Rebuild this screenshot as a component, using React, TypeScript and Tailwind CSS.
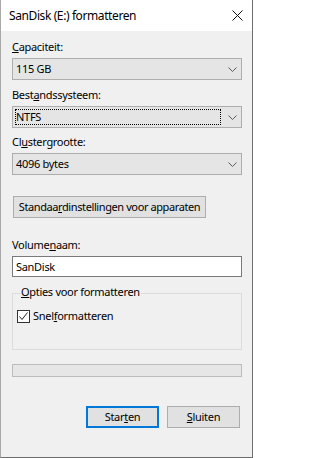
import type { ReactNode } from "react";

function Chevron() {
  return (
    <svg width="9" height="5" viewBox="0 0 9 5" className="shrink-0" aria-hidden="true">
      <polyline points="0.5,0.5 4.5,4.5 8.5,0.5" fill="none" stroke="#5a5a5a" strokeWidth="1" />
    </svg>
  );
}

function Label({ children, className = "" }: { children: ReactNode; className?: string }) {
  return <div className={`h-[16px] leading-[16px] ${className}`}>{children}</div>;
}

function Select({ value, focused = false, className = "" }: { value: string; focused?: boolean; className?: string }) {
  return (
    <div className={`flex h-[22px] items-center border border-[#adadad] bg-[#e5e5e5] p-[2px] pr-[4px] ${className}`}>
      <div
        className={`flex h-full flex-1 items-center border border-dotted ${
          focused ? "border-black" : "border-transparent"
        }`}
      >
        <span className="leading-[16px]">{value}</span>
      </div>
      <div className="ml-[7px]">
        <Chevron />
      </div>
    </div>
  );
}

export default function App() {
  return (
    <div className="flex h-[458px] w-[253px] flex-col border-r border-b border-l border-r-[#6e6e6e] border-b-[#6e6e6e] border-l-[#a8a8a8] bg-[#f0f0f0] font-['Noto_Sans',sans-serif] text-[11px] tracking-[-0.3px] whitespace-nowrap text-black">
      <div className="flex h-[31px] shrink-0 items-center justify-between bg-white pl-[8px] pr-[9px]">
        <span className="text-[12px] leading-[16px] tracking-[-0.4px]">SanDisk (E:) formatteren</span>
        <svg width="11" height="11" viewBox="0 0 11 11" aria-hidden="true">
          <path d="M0.5 0.5 L10.5 10.5 M10.5 0.5 L0.5 10.5" stroke="#111" strokeWidth="1" fill="none" />
        </svg>
      </div>

      <div className="flex flex-col pl-[11px] pr-[10px]">
        <Label className="mt-[8px]">
          <u>C</u>apaciteit:
        </Label>
        <Select className="mt-[3px]" value="115 GB" />

        <Label className="mt-[7px]">
          Best<u>a</u>ndssysteem:
        </Label>
        <Select className="mt-[3px]" value="NTFS" focused />

        <Label className="mt-[6px]">
          Cl<u>u</u>stergrootte:
        </Label>
        <Select className="mt-[3px]" value="4096 bytes" />

        <button
          type="button"
          className="mt-[21px] ml-[1px] flex h-[22px] w-[193px] items-center justify-center border border-[#adadad] bg-[#e1e1e1] leading-[16px] tracking-[-0.4px] whitespace-nowrap"
        >
          <span>
            Standaa<u>r</u>dinstellingen voor apparaten
          </span>
        </button>

        <Label className="mt-[19px]">
          Volume<u>n</u>aam:
        </Label>
        <div className="mt-[3px] flex h-[21px] items-center border border-[#7a7a7a] bg-white pl-[3px]">
          <span className="leading-[16px]">SanDisk</span>
        </div>

        <div className="relative mt-[16px] h-[57px] border border-[#dcdcdc]">
          <div className="absolute top-[-10px] left-[7px] bg-[#f0f0f0] px-[1px] leading-[16px]">
            <u>O</u>pties voor formatteren
          </div>
          <div className="mt-[14px] ml-[4px] flex h-[16px] items-center gap-[3px]">
            <div className="flex h-[13px] w-[13px] items-center justify-center border border-[#333333] bg-white">
              <svg width="11" height="11" viewBox="0 0 11 11" aria-hidden="true">
                <polyline points="1.5,5.5 4,8.5 9.5,1.5" fill="none" stroke="#222" strokeWidth="1" />
              </svg>
            </div>
            <span className="leading-[16px]">
              Snel<u>f</u>ormatteren
            </span>
          </div>
        </div>

        <div className="mt-[14px] h-[13px] border border-[#bcbcbc] bg-[#e6e6e6]" />

        <div className="mt-[29px] mr-[2px] flex justify-end gap-[8px]">
          <button
            type="button"
            className="flex h-[22px] w-[73px] items-center justify-center border-2 border-[#0078d7] bg-[#e1e1e1] leading-[16px]"
          >
            <span>
              Star<u>t</u>en
            </span>
          </button>
          <button
            type="button"
            className="flex h-[22px] w-[73px] items-center justify-center border border-[#adadad] bg-[#e1e1e1] leading-[16px]"
          >
            <span>
              <u>S</u>luiten
            </span>
          </button>
        </div>
      </div>
    </div>
  );
}
